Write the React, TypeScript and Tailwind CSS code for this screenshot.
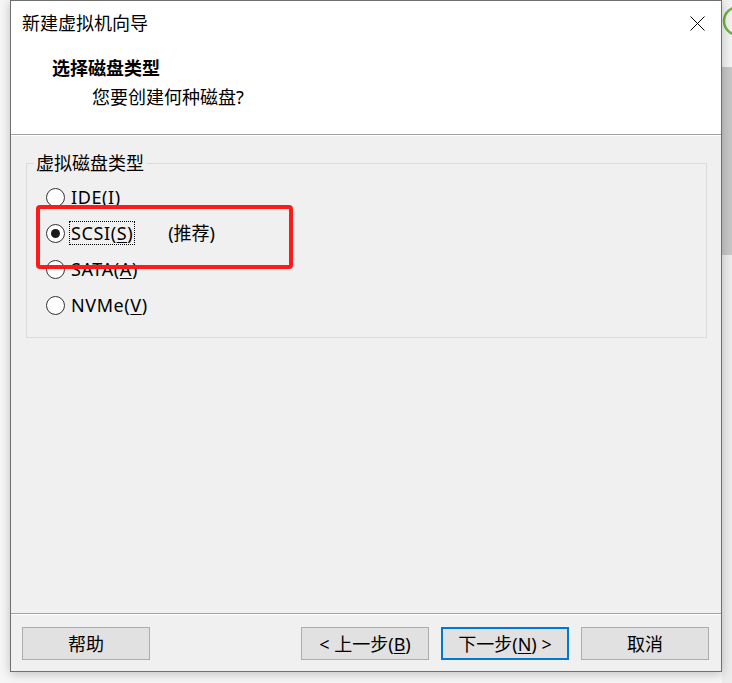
import React from 'react';

const FONT = { fontFamily: '"Noto Sans", "Noto Sans CJK SC", sans-serif' };

interface RadioRowProps {
  label: React.ReactNode;
  checked?: boolean;
  focused?: boolean;
  extra?: string;
}

// one option of the disk type group
const RadioRow: React.FC<RadioRowProps> = ({ label, checked = false, focused = false, extra }) => (
  <div className="flex h-[36px] items-center">
    <div className="flex h-[19px] w-[19px] items-center justify-center rounded-full border border-[#333333] bg-white">
      {checked && <div className="h-[9px] w-[9px] rounded-full bg-[#1a1a1a]" />}
    </div>
    <span
      className={`ml-[5px] px-[1px] text-[18px] leading-[22px] tracking-[0.6px] text-black ${
        focused ? 'outline outline-1 outline-dotted outline-black' : ''
      }`}
    >
      {label}
    </span>
    {extra && <span className="ml-[34px] text-[18px] leading-[22px] text-black">{extra}</span>}
  </div>
);

interface ButtonProps {
  children: React.ReactNode;
  primary?: boolean;
}

const DialogButton: React.FC<ButtonProps> = ({ children, primary = false }) => (
  <button
    className={`flex h-[33px] w-[128px] items-center justify-center bg-[#e1e1e1] text-[18px] leading-[22px] text-black ${
      primary ? 'border-2 border-[#0078d7]' : 'border border-[#adadad]'
    }`}
  >
    {children}
  </button>
);

const App: React.FC = () => {
  return (
    <div className="flex h-[683px] w-[732px] overflow-hidden bg-[#f6f6f6]" style={FONT}>
      <div className="w-[10px] shrink-0" />

      {/* wizard window */}
      <div className="relative z-10 flex h-[672px] w-[712px] shrink-0 flex-col border border-[#6f6f6f] bg-[#f0f0f0] shadow-[0_2px_10px_rgba(0,0,0,0.22)]">
        {/* header */}
        <div className="flex h-[133px] flex-col bg-white">
          <div className="flex h-[44px] items-center justify-between pl-[11px] pr-[16px]">
            <span className="text-[18px] leading-[24px] text-black">新建虚拟机向导</span>
            <svg width="15" height="15" viewBox="0 0 15 15" className="mt-[1px]">
              <path d="M0.5 0.5L14.5 14.5M14.5 0.5L0.5 14.5" stroke="#000" strokeWidth="1" fill="none" />
            </svg>
          </div>
          <div className="ml-[41px] mt-[11px] text-[18px] font-bold leading-[24px] text-black">选择磁盘类型</div>
          <div className="ml-[81px] mt-[5px] text-[18px] leading-[24px] text-black">您要创建何种磁盘?</div>
        </div>
        <div className="h-px bg-[#a0a0a0]" />
        <div className="h-px bg-white" />

        {/* content */}
        <div className="relative flex-1 pl-[15px] pr-[14px] pt-[15px]">
          <fieldset className="border border-[#dcdcdc]">
            <legend className="ml-[7px] px-[2px] text-[18px] leading-[24px] text-black">虚拟磁盘类型</legend>
            <div className="pb-[14px] pl-[19px] pt-[4px]">
              <RadioRow label="IDE(I)" />
              <RadioRow
                label={
                  <>
                    SCSI(<span className="underline underline-offset-2">S</span>)
                  </>
                }
                checked
                focused
                extra="(推荐)"
              />
              <RadioRow
                label={
                  <>
                    SATA(<span className="underline underline-offset-2">A</span>)
                  </>
                }
              />
              <RadioRow
                label={
                  <>
                    NVMe(<span className="underline underline-offset-2">V</span>)
                  </>
                }
              />
            </div>
          </fieldset>

          {/* red annotation box */}
          <div className="absolute left-[25px] top-[69px] h-[64px] w-[257px] rounded-[4px] border-[4px] border-[#ff1a1a]" />
        </div>

        <div className="h-px bg-[#a0a0a0]" />
        <div className="h-px bg-white" />

        {/* buttons */}
        <div className="flex h-[56px] items-start justify-between pl-[11px] pr-[12px] pt-[12px]">
          <DialogButton>帮助</DialogButton>
          <div className="flex gap-[12px]">
            <DialogButton>
              &lt; 上一步(<span className="underline underline-offset-2">B</span>)
            </DialogButton>
            <DialogButton primary>
              下一步(<span className="underline underline-offset-2">N</span>) &gt;
            </DialogButton>
            <DialogButton>取消</DialogButton>
          </div>
        </div>
      </div>

      {/* background strip on the right */}
      <div className="flex w-[10px] shrink-0 flex-col">
        <div className="relative h-[67px] overflow-hidden bg-[#f2f2f2]">
          <svg width="10" height="67" viewBox="0 0 10 67" className="absolute left-0 top-0">
            <circle cx="16" cy="21" r="14" stroke="#6db33f" strokeWidth="2.5" fill="none" />
          </svg>
        </div>
        <div className="h-[188px] bg-[#c6c6c6]" />
        <div className="flex-1 bg-[#ececec]" />
      </div>
    </div>
  );
};

export default App;
